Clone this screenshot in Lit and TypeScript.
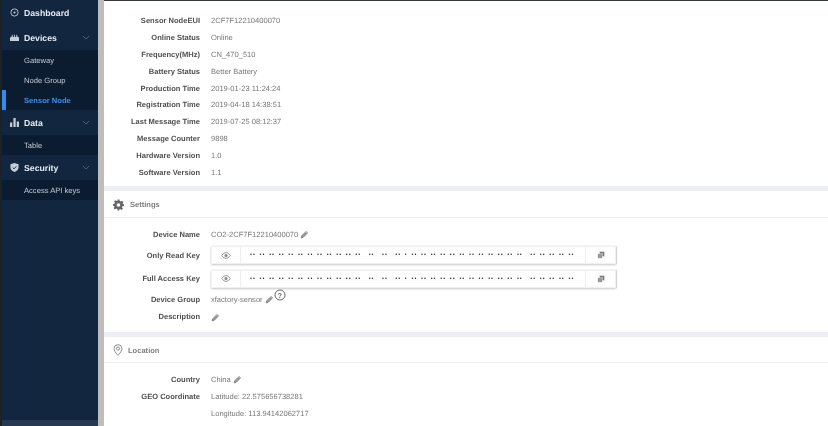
import { LitElement, html, css } from "lit";
import { customElement } from "lit/decorators.js";

const pencil = html`<svg class="pen" viewBox="0 0 12 12"><path d="M1.500 10.500l.6-2.600 6-6 2 2-6 6z" fill="#999" stroke="#777" stroke-width="1"/><path d="M7.500 2.500l2 2" stroke="#fff" stroke-width=".6"/></svg>`;
const eye = html`<svg class="eye" viewBox="0 0 14 10"><path d="M1 5c2-3 4-4 6-4s4 1 6 4c-2 3-4 4-6 4S3 8 1 5z" fill="none" stroke="#888" stroke-width="1.200"/><circle cx="7" cy="5" r="2.200" fill="#888"/></svg>`;
const copy = html`<svg class="copy" viewBox="0 0 12 12"><rect x="4" y="1" width="7" height="7" fill="#777"/><rect x="1" y="4" width="7" height="7" fill="#999" stroke="#fff" stroke-width=".6"/></svg>`;
const chev = html`<svg class="chev" viewBox="0 0 10 6"><path d="M1 1l4 4 4-4" fill="none" stroke="#5d7187" stroke-width="1"/></svg>`;

const topRows = [
  ["Sensor NodeEUI", "2CF7F12210400070"],
  ["Online Status", "Online"],
  ["Frequency(MHz)", "CN_470_510"],
  ["Battery Status", "Better Battery"],
  ["Production Time", "2019-01-23 11:24:24"],
  ["Registration Time", "2019-04-18 14:38:51"],
  ["Last Message Time", "2019-07-25 08:12:37"],
  ["Message Counter", "9898"],
  ["Hardware Version", "1.0"],
  ["Software Version", "1.1"],
];
const mask = "•• •• •• •• •• •• •• •• •• •• •• ••  ••  ••  •• • •• •• •• •• •• •• •• •• •• •• •• ••  •• •• •• •• ••";

@customElement("app-root")
export class AppRoot extends LitElement {
  static styles = css`
    :host { display: block; width: 828px; height: 426px; overflow: hidden; background: #fff; text-rendering: geometricPrecision;
      font-family: "Liberation Sans", Arial, sans-serif; font-size: 7.550px; color: #777; filter: blur(0.35px); }
    .page { display: flex; height: 426px; }
    .edge { width: 2px; background: #1c2226; flex: none; }
    .side { width: 96px; flex: none; background: #12263f; display: flex; flex-direction: column; color: #fff; position: relative; }
    .head { height: 25px; display: flex; align-items: center; padding-left: 8px; gap: 5px; font-weight: 700; font-size: 8.700px; color: #e6ebf0; }
    .head svg.ic { width: 9px; height: 9px; flex: none; }
    .head .chev { width: 8px; height: 5px; margin-left: auto; margin-right: 8px; }
    .sub { background: #0c1c30; display: flex; flex-direction: column; }
    .sub div { height: 20px; display: flex; align-items: center; padding-left: 22px; font-size: 7.600px; color: #c4cdd6; }
    .sub div.active { color: #3f8fe8; font-weight: 700; box-shadow: inset 4px 0 0 #2f8cf0; }
    .status { position: absolute; left: 0; right: 0; bottom: 0; height: 6px; background: #26394f; }
    .gutter { width: 6px; flex: none; background: #bdbdbd; }
    .main { flex: 1; display: flex; flex-direction: column; min-width: 0; }
    .topline { height: 1px; background: #33383c; }
    .info { height: 185px; padding-top: 11px; box-sizing: border-box; }
    .info .row { height: 16.900px; }
    .row { display: flex; align-items: center; height: 17px; }
    .lab { width: 96px; text-align: right; font-weight: 700; color: #505050; flex: none; white-space: nowrap; }
    .val { margin-left: 11px; display: flex; align-items: center; gap: 2px; white-space: nowrap; }
    .band { height: 5px; background: #eeeff5; flex: none; }
    .sec { height: 27px; flex: none; box-sizing: border-box; padding-top: 1px; border-bottom: 1px solid #eeeeee; display: flex; align-items: center; padding-left: 9px; gap: 6px; font-weight: 700; color: #7d7d7d; }
    .sec svg { width: 11px; height: 12px; }
    .sec.short { height: 26px; gap: 5px; }
    .sec.short svg { width: 10px; }
    .settings { height: 114px; flex: none; padding-top: 8px; box-sizing: border-box; }
    .keyrow { height: 22px; margin: 1px 0 1.500px; display: flex; align-items: center; }
    .keyrow + .row { margin-top: -0.500px; }
    .key { margin-left: 11px; width: 405px; height: 18px; display: flex; align-items: center; border: 1px solid #f0f0f0; box-sizing: border-box; box-shadow: 0 1px 2px #c9c9c9, 1px 0 1px #dddddd; background: #fff; }
    .key .l { width: 28px; height: 100%; display: flex; align-items: center; justify-content: center; border-right: 1px solid #efefef; flex: none; }
    .key .m { flex: 1; padding-left: 9px; color: #333; font-size: 5.500px; letter-spacing: 1px; word-spacing: 1.200px; white-space: pre; overflow: hidden; }
    .key .r { width: 29px; height: 100%; display: flex; align-items: center; justify-content: center; border-left: 1px solid #efefef; flex: none; }
    .eye { width: 10px; height: 7px; }
    .copy { width: 8px; height: 8px; }
    .pen { width: 9px; height: 9px; flex: none; }
    .help { width: 12px; height: 12px; margin: -8px 0 0 -2px; }
    .desc { margin-top: 3px; }
    .loc { padding-top: 8px; }
  `;

  private rows() {
    return topRows.map(([a, b]) => html`<div class="row"><div class="lab">${a}</div><div class="val">${b}</div></div>`);
  }

  private keyRow(label: string) {
    return html`<div class="keyrow"><div class="lab">${label}</div>
      <div class="key"><div class="l">${eye}</div><div class="m">${mask}</div><div class="r">${copy}</div></div></div>`;
  }

  render() {
    return html`<div class="page">
      <div class="edge"></div>
      <nav class="side">
        <div class="head"><svg class="ic" viewBox="0 0 10 10"><circle cx="5" cy="5" r="4" fill="none" stroke="#c5ced7" stroke-width="1"/><circle cx="5" cy="5" r="1.200" fill="#c5ced7"/></svg>Dashboard</div>
        <div class="head"><svg class="ic" viewBox="0 0 10 10"><path d="M0 9V5l2-1V2h1v2l1.500.8V2h1v2.800L7 4V2h1v2l2 1v4z" fill="#c5ced7"/></svg>Devices${chev}</div>
        <div class="sub"><div>Gateway</div><div>Node Group</div><div class="active">Sensor Node</div></div>
        <div class="head"><svg class="ic" viewBox="0 0 10 10"><path d="M0 10V5h2.500v5zM3.800 10V0h2.500v10zM7.500 10V4H10v6z" fill="#c5ced7"/></svg>Data${chev}</div>
        <div class="sub"><div>Table</div></div>
        <div class="head"><svg class="ic" viewBox="0 0 10 10"><path d="M5 0l4.500 1.500V5c0 2.500-2 4-4.500 5C2.500 9 .5 7.500.5 5V1.500z" fill="#c5ced7"/><path d="M3 5l1.500 1.500L7 3.800" fill="none" stroke="#12263f" stroke-width="1"/></svg>Security${chev}</div>
        <div class="sub"><div>Access API keys</div></div>
        <div class="status"></div>
      </nav>
      <div class="gutter"></div>
      <main class="main">
        <div class="topline"></div>
        <section class="info">${this.rows()}</section>
        <div class="band"></div>
        <div class="sec"><svg viewBox="0 0 12 12"><path d="M5 0h2l.3 1.700 1.200.5L10 1.300l1.400 1.400-1 1.400.5 1.200L12 5v2l-1.700.3-.5 1.200 1 1.500-1.400 1.400-1.500-1-1.200.5L7 12H5l-.3-1.700-1.200-.5-1.500 1L.6 9.400l1-1.500-.5-1.200L0 7V5l1.700-.3.400-1.200-1-1.400L2.500.7l1.500 1 1.200-.5z" fill="#666"/><circle cx="6" cy="6" r="2" fill="#fff"/></svg>Settings</div>
        <section class="settings">
          <div class="row"><div class="lab">Device Name</div><div class="val">CO2-2CF7F12210400070 ${pencil}</div></div>
          ${this.keyRow("Only Read Key")}
          ${this.keyRow("Full Access Key")}
          <div class="row"><div class="lab">Device Group</div><div class="val">xfactory-sensor ${pencil}<svg class="help" viewBox="0 0 12 12"><circle cx="6" cy="6" r="5" fill="none" stroke="#666" stroke-width="1"/><text x="6" y="8.500" text-anchor="middle" font-size="7" font-weight="700" fill="#666">?</text></svg></div></div>
          <div class="row"><div class="lab">Description</div><div class="val desc">${pencil}</div></div>
        </section>
        <div class="band"></div>
        <div class="sec short"><svg viewBox="0 0 10 13"><path d="M5 .7a4.300 4.300 0 0 1 4.300 4.300C9.300 8 5 12.300 5 12.300S.7 8 .7 5A4.300 4.300 0 0 1 5 .7z" fill="none" stroke="#777" stroke-width=".9"/><circle cx="5" cy="5" r="1.700" fill="none" stroke="#777" stroke-width=".9"/></svg>Location</div>
        <section class="loc">
          <div class="row"><div class="lab">Country</div><div class="val">China ${pencil}</div></div>
          <div class="row"><div class="lab">GEO Coordinate</div><div class="val">Latitude: 22.575656738281</div></div>
          <div class="row"><div class="lab"></div><div class="val">Longitude: 113.94142062717</div></div>
        </section>
      </main>
    </div>`;
  }
}
